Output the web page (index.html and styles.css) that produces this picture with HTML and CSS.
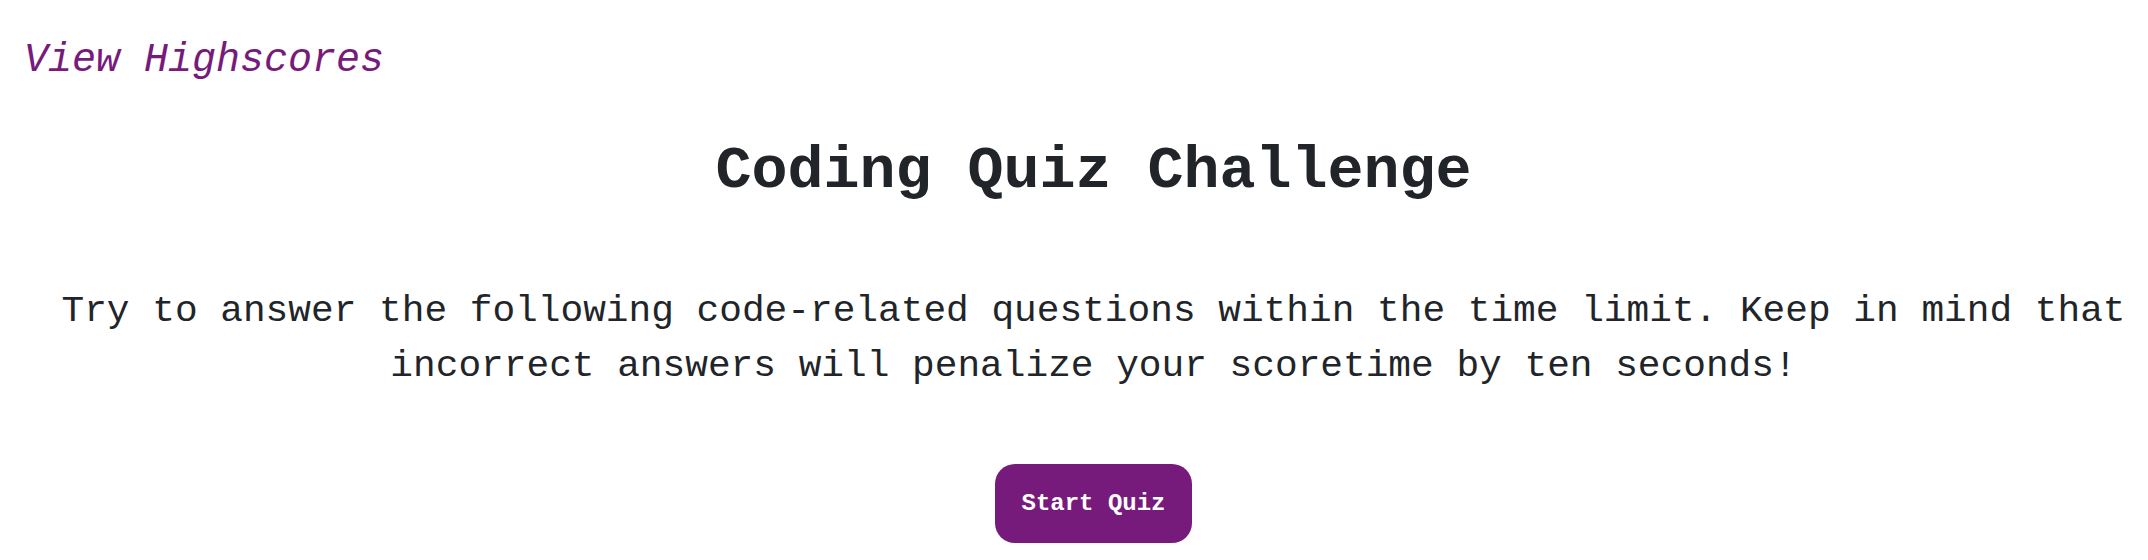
FILE: index.html
```html
<!DOCTYPE html>
<html lang="en">
<head>
<meta charset="utf-8">
<title>Coding Quiz Challenge</title>
<link rel="stylesheet" href="styles.css">
</head>
<body>
<header class="top-bar">
  <a class="highscores-link" href="#">View Highscores</a>
</header>
<main class="intro">
  <h1 class="intro-title">Coding Quiz Challenge</h1>
  <p class="intro-text">Try to answer the following code-related questions within the time limit. Keep in mind that incorrect answers will penalize your scoretime by ten seconds!</p>
  <button class="start-btn" type="button">Start Quiz</button>
</main>
</body>
</html>
```

FILE: styles.css
```css
* {
  box-sizing: border-box;
}

html, body {
  margin: 0;
  padding: 0;
  background: #ffffff;
}

body {
  font-family: "Liberation Mono", "Courier New", monospace;
  color: #212529;
}

.top-bar {
  padding: 38px 0 0 24px;
}

.highscores-link {
  display: inline-block;
  font-size: 40px;
  line-height: 45px;
  font-style: italic;
  color: #761b7b;
  text-decoration: none;
}

.intro {
  display: flex;
  flex-direction: column;
  align-items: center;
  padding-left: 39px;
}

.intro-title {
  margin: 54px 0 0;
  font-size: 60px;
  line-height: 68px;
  font-weight: bold;
  text-align: center;
}

.intro-text {
  margin: 79px 0 0;
  font-size: 37.8px;
  line-height: 55px;
  text-align: center;
}

.start-btn {
  margin-top: 70px;
  padding: 26px 26px;
  font-family: "Liberation Mono", "Courier New", monospace;
  font-size: 24px;
  line-height: 27px;
  font-weight: bold;
  color: #ffffff;
  background: #761b7b;
  border: none;
  border-radius: 20px;
}
```
